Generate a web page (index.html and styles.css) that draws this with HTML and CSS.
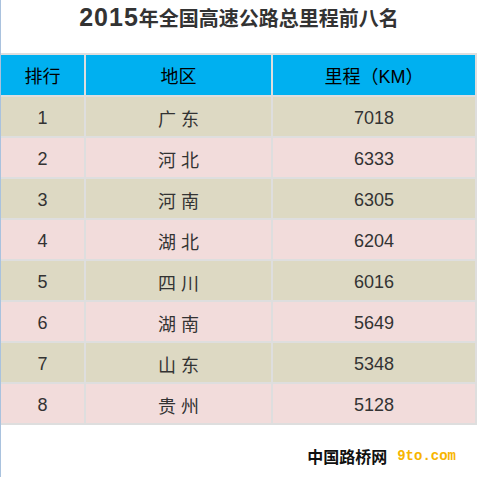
FILE: index.html
```html
<!DOCTYPE html>
<html lang="zh-CN">
<head>
  <meta charset="UTF-8" />
  <meta name="viewport" content="width=device-width, initial-scale=1.0"/>
  <title>2015年全国高速公路总里程前八名</title>
  <link rel="stylesheet" href="styles.css">
</head>
<body>

  <!-- Title -->
  <h1 class="title"><span class="title-year">2015</span>年全国高速公路总里程前八名</h1>

  <!-- Ranking table -->
  <div class="table-wrap">
    <table class="rank-table">
      <thead>
        <tr>
          <th class="col-rank">排行</th>
          <th class="col-area">地区</th>
          <th class="col-km">里程（KM）</th>
        </tr>
      </thead>
      <tbody>
        <tr class="odd"><td>1</td><td>广 东</td><td>7018</td></tr>
        <tr class="even"><td>2</td><td>河 北</td><td>6333</td></tr>
        <tr class="odd"><td>3</td><td>河 南</td><td>6305</td></tr>
        <tr class="even"><td>4</td><td>湖 北</td><td>6204</td></tr>
        <tr class="odd"><td>5</td><td>四 川</td><td>6016</td></tr>
        <tr class="even"><td>6</td><td>湖 南</td><td>5649</td></tr>
        <tr class="odd"><td>7</td><td>山 东</td><td>5348</td></tr>
        <tr class="even"><td>8</td><td>贵 州</td><td>5128</td></tr>
      </tbody>
    </table>
  </div>

  <!-- Source mark -->
  <div class="source">
    <span class="source-name">中国路桥网</span>
    <span class="source-url">9to.com</span>
  </div>

</body>
</html>
```

FILE: styles.css
```css
html, body {
  margin: 0;
  padding: 0;
  background-color: #ffffff;
  font-family: "Liberation Sans", "Noto Sans CJK SC", sans-serif;
  color: #333333;
}

body {
  border-left: 1px solid #a9c2de;
  height: 477px;
  box-sizing: border-box;
}

.title {
  margin: 0;
  padding-top: 5px;
  height: 48px;
  line-height: 24px;
  font-size: 20px;
  font-weight: bold;
  text-align: center;
  color: #333333;
  padding-right: 2px;
}

.title-year {
  font-size: 25px;
  letter-spacing: 1px;
}

.table-wrap {
  overflow: hidden;
  width: 478px;
}

.rank-table {
  margin-left: -2px;
  border-collapse: separate;
  border-spacing: 2px;
  background-color: #dedede;
  table-layout: fixed;
  width: 478px;
}

.rank-table th,
.rank-table td {
  padding: 0;
  text-align: center;
  font-size: 18px;
  font-weight: normal;
}

.rank-table th {
  height: 40px;
  background-color: #00b0f0;
  color: #000000;
}

.rank-table td {
  height: 36px;
  padding-top: 3px;
  color: #333333;
}

.col-rank { width: 83px; }
.col-area { width: 185px; }

.odd td { background-color: #ddd9c3; }
.even td { background-color: #f2dcdb; }

.source {
  display: flex;
  justify-content: flex-end;
  align-items: center;
  gap: 10px;
  padding-top: 19px;
  padding-right: 23px;
}

.source-name {
  font-family: "Noto Sans CJK SC", sans-serif;
  font-size: 16px;
  font-weight: bold;
  color: #111111;
}

.source-url {
  font-family: "Liberation Mono", monospace;
  font-size: 14px;
  font-weight: bold;
  color: #f7b500;
}
```
